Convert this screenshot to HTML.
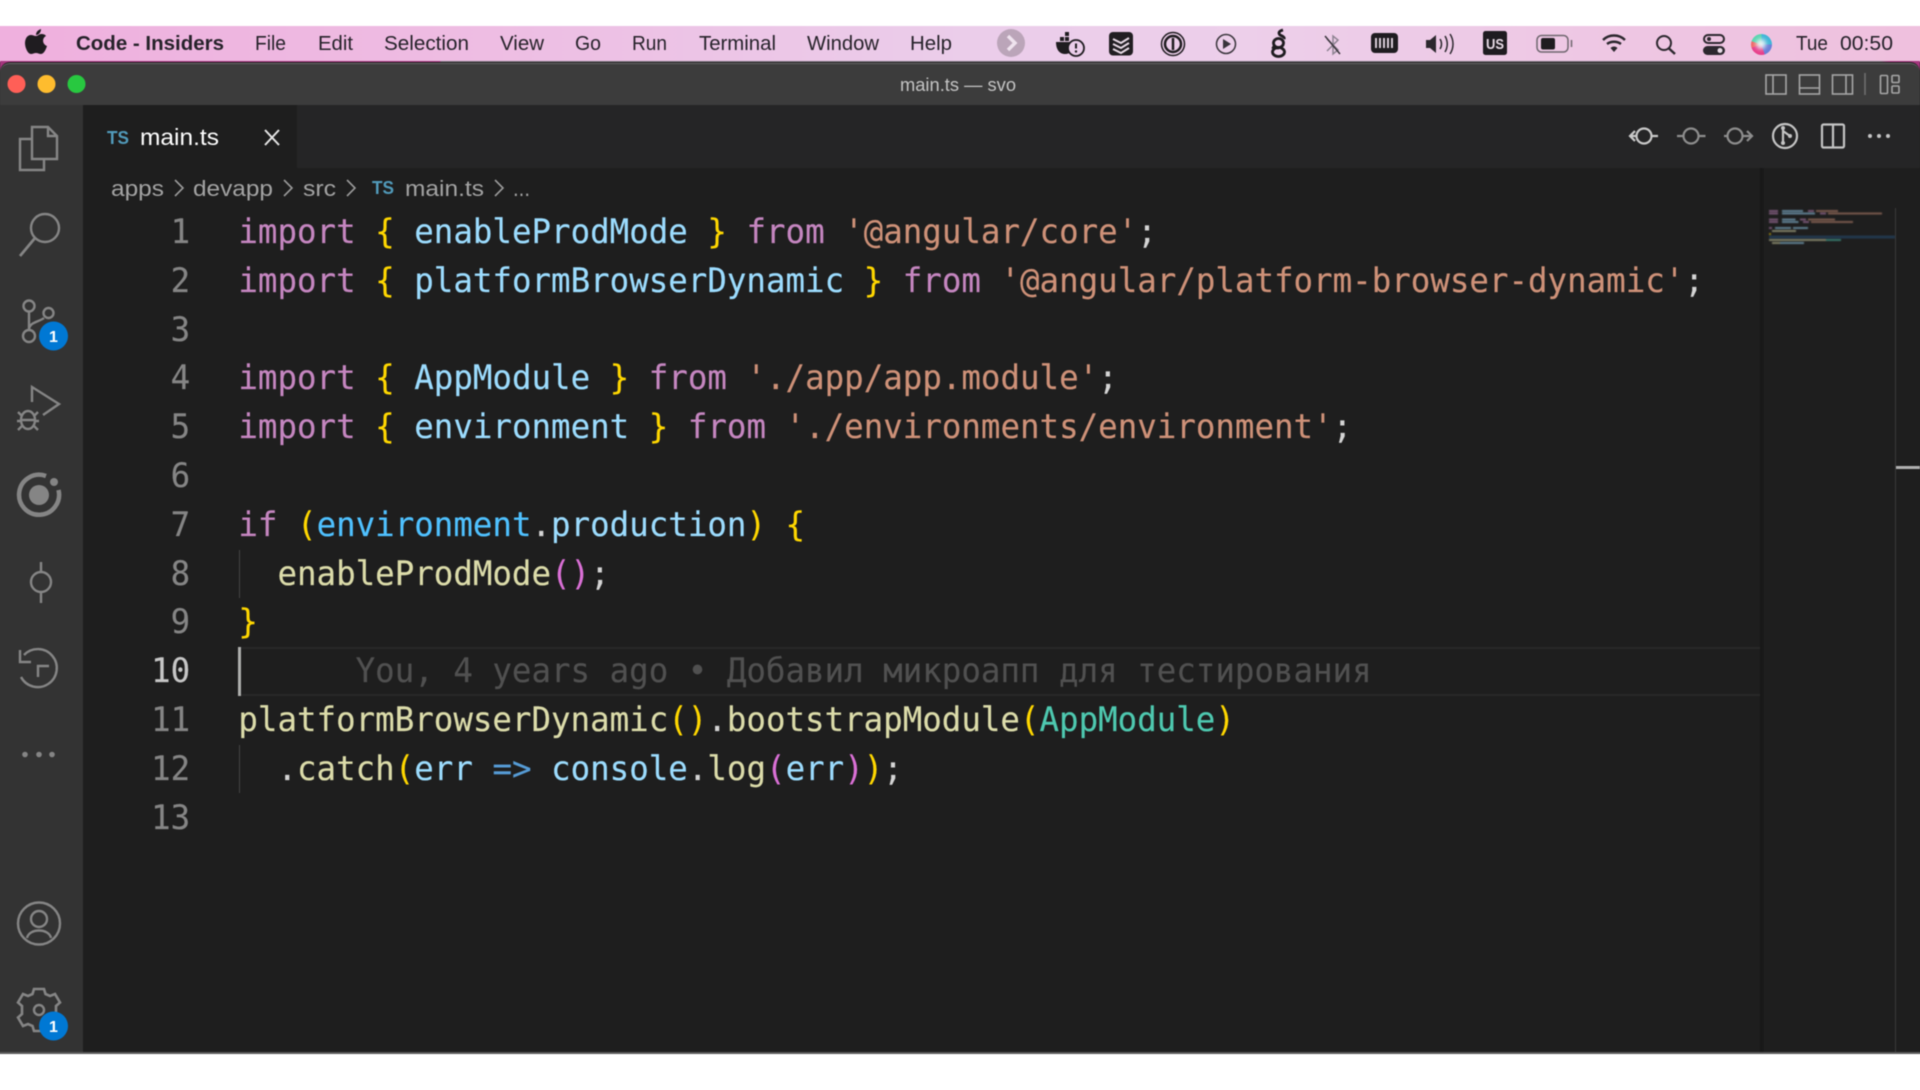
<!DOCTYPE html>
<html lang="en"><head><meta charset="utf-8"><title>main.ts — svo</title>
<style>
html,body{margin:0;padding:0;background:#fff;width:1920px;height:1080px;overflow:hidden}
#blur{position:absolute;left:-10px;top:-10px;width:1940px;height:1100px;overflow:hidden;filter:blur(.45px);background:#fff}
#root{position:absolute;left:10px;top:10px;width:1920px;height:1080px;background:#fff}
#edgeL{left:-10px;top:62px;width:10px;height:992px;background:#333}
#edgeR{left:1920px;top:62px;width:10px;height:992px;background:#1e1e1e}
#edgeMenuL{left:-10px;top:26px;width:10px;height:36px;background:#efb0de}
#edgeMenuR{left:1920px;top:26px;width:10px;height:36px;background:#efc0de}
.abs{position:absolute}
#menubar{left:0;top:26px;width:1920px;height:36px;background:linear-gradient(90deg,#efb0de 0%,#eebde3 25%,#ebcdea 50%,#edcfea 65%,#efc0de 100%)}
#win{left:0;top:62px;width:1920px;height:991px;background:#1e1e1e;border-radius:10px 10px 0 0;overflow:hidden}
#corner{left:0;top:61px;width:1920px;height:14px;background:linear-gradient(90deg,#a5357e 0,#a5357e 440px,#7d7680 441px,#7d7680 1880px,#a5357e 1890px)}
#title{left:0;top:63px;width:1920px;height:42px;background:#3c3c3c;border-top:1px solid #6a6a6a;box-sizing:border-box;border-radius:10px 10px 0 0}
#tabs{left:83px;top:105px;width:1837px;height:63px;background:#252526}
#tab{left:83px;top:105px;width:214px;height:63px;background:#1e1e1e}
#act{left:0;top:105px;width:83px;height:948px;background:#333}
#bottom{left:-10px;top:1052px;width:1940px;height:2px;background:#5a5a5a}
.ln,.n{position:absolute;font-family:"DejaVu Sans Mono","Liberation Mono",monospace;font-size:32.46px;line-height:48.8px;height:48.8px;white-space:pre;text-rendering:geometricPrecision;transform:scaleY(1.04);transform-origin:0 35.5px;-webkit-text-stroke:.15px currentColor}
.ln{left:238.4px;color:#d4d4d4}
.n{left:100px;width:90.2px;text-align:right;color:#858585}
.k{color:#c586c0}.b{color:#ffd700}.v{color:#9cdcfe}.s{color:#ce9178}.f{color:#dcdcaa}.t{color:#4ec9b0}.c{color:#4fc1ff}.o{color:#da70d6}.a{color:#569cd6}
svg{position:absolute;left:0;top:0}
</style></head><body><div id="blur"><div id="root">
<div class="abs" id="edgeL"></div><div class="abs" id="edgeR"></div><div class="abs" id="edgeMenuL"></div><div class="abs" id="edgeMenuR"></div>
<div class="abs" id="menubar"></div>
<div class="abs" id="corner"></div>
<div class="abs" id="win"></div>
<div class="abs" id="title"></div>
<div class="abs" id="tabs"></div>
<div class="abs" id="tab"></div>
<div class="abs" id="act"></div>
<div class="abs" style="left:240px;top:647px;width:1520px;height:49px;box-sizing:border-box;border:2px solid #282828;border-right:0;border-left:0"></div>
<div class="abs" style="left:1760px;top:168px;width:4px;height:885px;background:linear-gradient(90deg,#171717,#1a1a1a)"></div>
<div class="abs" style="left:1895px;top:208px;width:1px;height:845px;background:#3a3a3a"></div>
<div class="abs" style="left:1896px;top:466px;width:24px;height:3px;background:#b0b0b0"></div>
<div class="abs" style="left:239px;top:550px;width:1px;height:48px;background:#444"></div>
<div class="abs" style="left:239px;top:745px;width:1px;height:48px;background:#444"></div>
<div class="abs" style="left:238px;top:647px;width:3px;height:49px;background:#aeafad"></div>

<div class="n" style="top:208px">1</div>
<div class="n" style="top:256.8px">2</div>
<div class="n" style="top:305.6px">3</div>
<div class="n" style="top:354.4px">4</div>
<div class="n" style="top:403.2px">5</div>
<div class="n" style="top:452px">6</div>
<div class="n" style="top:500.8px">7</div>
<div class="n" style="top:549.6px">8</div>
<div class="n" style="top:598.4px">9</div>
<div class="n" style="top:647.2px;color:#c6c6c6">10</div>
<div class="n" style="top:696px">11</div>
<div class="n" style="top:744.8px">12</div>
<div class="n" style="top:793.6px">13</div>

<div class="ln" style="top:208px"><span class="k">import</span> <span class="b">{</span> <span class="v">enableProdMode</span> <span class="b">}</span> <span class="k">from</span> <span class="s">'@angular/core'</span>;</div>
<div class="ln" style="top:256.8px"><span class="k">import</span> <span class="b">{</span> <span class="v">platformBrowserDynamic</span> <span class="b">}</span> <span class="k">from</span> <span class="s">'@angular/platform-browser-dynamic'</span>;</div>
<div class="ln" style="top:354.4px"><span class="k">import</span> <span class="b">{</span> <span class="v">AppModule</span> <span class="b">}</span> <span class="k">from</span> <span class="s">'./app/app.module'</span>;</div>
<div class="ln" style="top:403.2px"><span class="k">import</span> <span class="b">{</span> <span class="v">environment</span> <span class="b">}</span> <span class="k">from</span> <span class="s">'./environments/environment'</span>;</div>
<div class="ln" style="top:500.8px"><span class="k">if</span> <span class="b">(</span><span class="c">environment</span>.<span class="v">production</span><span class="b">)</span> <span class="b">{</span></div>
<div class="ln" style="top:549.6px">  <span class="f">enableProdMode</span><span class="o">()</span>;</div>
<div class="ln" style="top:598.4px"><span class="b">}</span></div>
<div class="ln" style="top:647.2px;color:#505050">      You, 4 years ago • Добавил микроапп для тестирования</div>
<div class="ln" style="top:696px"><span class="f">platformBrowserDynamic</span><span class="b">()</span>.<span class="f">bootstrapModule</span><span class="b">(</span><span class="t">AppModule</span><span class="b">)</span></div>
<div class="ln" style="top:744.8px">  .<span class="f">catch</span><span class="b">(</span><span class="v">err</span> <span class="a">=&gt;</span> <span class="v">console</span>.<span class="f">log</span><span class="o">(</span><span class="v">err</span><span class="o">)</span><span class="b">)</span>;</div>

<svg width="1920" height="1080" viewBox="0 0 1920 1080" font-family="'Liberation Sans',sans-serif">
<!-- menu labels -->
<g fill="#26222a" font-size="20">
<text x="76" y="50" font-weight="700" textLength="148" lengthAdjust="spacingAndGlyphs">Code - Insiders</text>
<text x="255" y="50" textLength="31" lengthAdjust="spacingAndGlyphs">File</text>
<text x="318" y="50" textLength="35" lengthAdjust="spacingAndGlyphs">Edit</text>
<text x="384" y="50" textLength="85" lengthAdjust="spacingAndGlyphs">Selection</text>
<text x="500" y="50" textLength="44" lengthAdjust="spacingAndGlyphs">View</text>
<text x="575" y="50" textLength="26" lengthAdjust="spacingAndGlyphs">Go</text>
<text x="632" y="50" textLength="35" lengthAdjust="spacingAndGlyphs">Run</text>
<text x="699" y="50" textLength="77" lengthAdjust="spacingAndGlyphs">Terminal</text>
<text x="807" y="50" textLength="72" lengthAdjust="spacingAndGlyphs">Window</text>
<text x="910" y="50" textLength="42" lengthAdjust="spacingAndGlyphs">Help</text>
<text x="1796" y="50" textLength="32" lengthAdjust="spacingAndGlyphs">Tue</text>
<text x="1840" y="50" textLength="53" lengthAdjust="spacingAndGlyphs">00:50</text>
</g>
<!-- apple -->
<path fill="#1f1c20" d="M41 29c-3 1-5 3-5 6 3 0 5-3 5-6zM36 36c-2 0-3-1-5-1-4 0-6 4-6 8 0 5 3 11 6 11 2 0 3-1 5-1s3 1 5 1c3 0 5-5 6-8-5-2-5-8-1-10-1-2-4-2-5-2-2 0-3 2-5 2z"/>
<!-- traffic lights -->
<circle cx="16.5" cy="84" r="9" fill="#ff5f57"/><circle cx="46.5" cy="84" r="9" fill="#febc2e"/><circle cx="76.5" cy="84" r="9" fill="#28c840"/>
<text x="900" y="91" font-size="18" fill="#c4c4c4" textLength="116" lengthAdjust="spacingAndGlyphs">main.ts — svo</text>

<!-- status icons -->
<circle cx="1011" cy="43" r="14" fill="#bba5b9"/><path d="M1008 36l7 7-7 7" fill="none" stroke="#efe3ee" stroke-width="3.5"/>
<!-- docker -->
<g fill="#1f1c20"><path d="M1056 42h19c0 8-5 12-10 12-6 0-9-5-9-12z"/><rect x="1060" y="37" width="4" height="4"/><rect x="1065" y="37" width="4" height="4"/><rect x="1065" y="32" width="4" height="4"/></g>
<circle cx="1076" cy="48" r="8" fill="#ebcdea" stroke="#1f1c20" stroke-width="1.8"/><path d="M1076 43.500v5" stroke="#1f1c20" stroke-width="2"/><circle cx="1076" cy="51.500" r="1.200" fill="#1f1c20"/>
<!-- todoist -->
<rect x="1109" y="32" width="24" height="23.500" rx="4" fill="#211e22"/><path d="M1113 39l8 4 8-5M1113 44l8 4 8-5M1113 49l8 4 8-5" fill="none" stroke="#e8dbe6" stroke-width="2"/>
<!-- 1password -->
<circle cx="1173" cy="44" r="11.500" fill="none" stroke="#1f1c20" stroke-width="1.500"/><circle cx="1173" cy="44" r="8" fill="none" stroke="#1f1c20" stroke-width="2.500"/><path d="M1173 38v12" stroke="#1f1c20" stroke-width="2.500"/>
<!-- play -->
<circle cx="1226" cy="44" r="9.500" fill="none" stroke="#3a353c" stroke-width="1.500"/><path d="M1223 39l8 5-8 5z" fill="#3a353c"/>
<!-- snake -->
<g fill="none" stroke="#1f1c20" stroke-width="2.800"><ellipse cx="1278.500" cy="43" rx="5" ry="4.500"/><ellipse cx="1278.500" cy="52" rx="6" ry="4.500"/><path d="M1283 30c-4 1-5 3-3 5 2 1 5 2 4 4"/><path d="M1272 47c2 1 5 1 7 1"/></g>
<!-- bt off -->
<path d="M1327 39l11 11-5 4v-18l5 4-11 11" fill="none" stroke="#8d8391" stroke-width="1.500"/><path d="M1325 36l15 18" stroke="#3a353c" stroke-width="1.500"/>
<!-- memory -->
<rect x="1371" y="33" width="27" height="20" rx="4" fill="#1f1c20"/><path d="M1376 38v10M1380 38v10M1384 38v10M1388 38v10M1392 38v10" stroke="#e8dbe6" stroke-width="1.800"/>
<!-- volume -->
<path d="M1426 40h4l6-5v18l-6-5h-4z" fill="#2c282e"/><path d="M1440 39c2 3 2 7 0 10M1445 36c3 5 3 11 0 16M1450 34c4 6 4 14 0 20" fill="none" stroke="#2c282e" stroke-width="1.500"/>
<!-- US -->
<rect x="1483" y="31" width="24" height="24" rx="2.500" fill="#1f1c20"/><text x="1486" y="49" font-size="15" font-weight="700" fill="#e8dbe6" textLength="18" lengthAdjust="spacingAndGlyphs">US</text>
<!-- battery -->
<rect x="1537" y="35.500" width="31" height="16.500" rx="4.500" fill="none" stroke="#6f676f" stroke-width="1.500"/><rect x="1541" y="38" width="14" height="11.500" rx="2" fill="#1f1c20"/><path d="M1571.500 40v7" stroke="#6f676f" stroke-width="1.500"/>
<!-- wifi -->
<path d="M1603 40c6-6 16-6 22 0M1607 44c4-3 10-3 14 0" fill="none" stroke="#2c282e" stroke-width="2.400"/><path d="M1610.500 48c2-2 5-2 7 0l-3.500 4z" fill="#2c282e"/>
<!-- search -->
<circle cx="1664" cy="43" r="7" fill="none" stroke="#2c282e" stroke-width="2"/><path d="M1669 48.500l6 5.500" stroke="#2c282e" stroke-width="2.400"/>
<!-- control -->
<rect x="1704" y="35" width="20" height="8" rx="4" fill="none" stroke="#2c282e" stroke-width="2"/><circle cx="1709" cy="39" r="2" fill="#2c282e"/><rect x="1703" y="46" width="22" height="9" rx="4.500" fill="#2c282e"/><circle cx="1720" cy="50.500" r="2.500" fill="#e8dbe6"/>

<!-- layout icons -->
<g fill="none" stroke="#a6a6a6" stroke-width="1.600">
<rect x="1766" y="75" width="20" height="19" /><path d="M1773 75v19"/>
<rect x="1799.500" y="75" width="20" height="19"/><path d="M1799.500 88h20"/>
<rect x="1832.500" y="75" width="20" height="19"/><path d="M1846 75v19"/>
<path d="M1865 73v22" stroke="#6e6e6e"/>
<rect x="1880.500" y="75.500" width="7" height="18" rx="1"/><rect x="1892" y="75.500" width="7" height="7" rx="1"/><rect x="1892" y="86" width="7" height="7" rx="1"/>
</g>
<!-- tab -->
<text x="107" y="144" font-size="18" font-weight="700" fill="#519aba" textLength="22" lengthAdjust="spacingAndGlyphs">TS</text>
<text x="140" y="145" font-size="23" fill="#ffffff" textLength="79" lengthAdjust="spacingAndGlyphs">main.ts</text>
<path d="M265 130l14 15M279 130l-14 15" stroke="#e6e6e6" stroke-width="2"/>
<!-- tab actions -->
<g fill="none" stroke-width="2.200">
<g stroke="#c8c8c8"><circle cx="1644" cy="136" r="7.500"/><path d="M1637 136h-6M1635 131l-5 5 5 5M1651 136h7"/></g>
<g stroke="#8d8d8d"><circle cx="1691" cy="136" r="7.500"/><path d="M1677 136h6.500M1698.500 136h7"/></g>
<g stroke="#8d8d8d"><circle cx="1735" cy="136" r="7.500"/><path d="M1724 136h3.500M1742.500 136h8M1747 131l5 5-5 5"/></g>
<g stroke="#c4c4c4"><circle cx="1785" cy="136" r="12"/><path d="M1783 129v14M1783 131l7 5"/></g>
<g stroke="#c4c4c4"><rect x="1822" y="124.500" width="22" height="23" rx="1.500"/><path d="M1833 124.500v23"/></g>
</g>
<g fill="#c4c4c4"><circle cx="1870" cy="136" r="2"/><circle cx="1879" cy="136" r="2"/><circle cx="1888" cy="136" r="2"/><circle cx="1783" cy="128" r="2"/><circle cx="1783" cy="143" r="2"/><circle cx="1790" cy="136" r="2"/></g>
<!-- breadcrumbs -->
<g font-size="22" fill="#a3a3a3">
<text x="111" y="196" textLength="53" lengthAdjust="spacingAndGlyphs">apps</text>
<text x="193" y="196" textLength="80" lengthAdjust="spacingAndGlyphs">devapp</text>
<text x="303" y="196" textLength="33" lengthAdjust="spacingAndGlyphs">src</text>
<text x="405" y="196" textLength="79" lengthAdjust="spacingAndGlyphs">main.ts</text>
<text x="513" y="196" textLength="17" lengthAdjust="spacingAndGlyphs">...</text>
<text x="372" y="194" font-size="18" font-weight="700" fill="#519aba" textLength="22" lengthAdjust="spacingAndGlyphs">TS</text>
</g>
<path d="M175 180l8 8-8 8M284 180l8 8-8 8M347 180l8 8-8 8M495 180l8 8-8 8" fill="none" stroke="#9a9a9a" stroke-width="1.600"/>

<!-- activity bar -->
<g fill="none" stroke="#858585" stroke-width="2.400">
<path d="M32 127h16l9 9v23H32zM48 127v9h9"/><path d="M32 139H20v31h24v-11"/>
<circle cx="45" cy="228" r="14"/><path d="M35 238l-15 18" stroke-width="2.800"/>
<circle cx="29" cy="306" r="5.500"/><circle cx="48.500" cy="313" r="5"/><circle cx="29" cy="336" r="6"/><path d="M29 312v18M29 330c0-8 10-8 15-12"/>
<path d="M32 402v-15l27 17-16 11"/><ellipse cx="28" cy="420" rx="7" ry="9"/><path d="M18 412l4 4M38 412l-4 4M17 421h5M39 421h-5M18 430l4-4M38 430l-4-4M21 420h14"/>
<path d="M58.500 490A20 20 0 1 1 46 476" stroke-width="4.500"/>
<circle cx="41" cy="582" r="10"/><path d="M41 562v10M41 592v11"/>
<path d="M24 655A19 19 0 1 1 21 677M20 650v12h11M38 677v-11h11"/>
<circle cx="39" cy="923.500" r="21"/><circle cx="39" cy="919" r="8"/><path d="M27 938c2-10 22-10 24 0"/>
<circle cx="39" cy="1010" r="5"/><path d="M34 989h10l1.500 5 4.500 2 5-2 5 8.500-4 3.500v8l4 3.500-5 8.500-5-2-4.500 2-1.500 5H34l-1.500-5-4.500-2-5 2-5-8.500 4-3.500v-8l-4-3.500 5-8.500 5 2 4.500-2z" stroke-width="2.600"/>
</g>
<g fill="#858585"><circle cx="39" cy="495" r="10"/><circle cx="54" cy="482" r="4"/><circle cx="25" cy="754.500" r="2.800"/><circle cx="39" cy="754.500" r="2.800"/><circle cx="52" cy="754.500" r="2.800"/></g>
<circle cx="53.500" cy="336" r="14.500" fill="#0078d4"/><text x="53.500" y="342" font-size="16" font-weight="700" fill="#fff" text-anchor="middle">1</text>
<circle cx="53.500" cy="1026" r="14.500" fill="#0078d4"/><text x="53.500" y="1032" font-size="16" font-weight="700" fill="#fff" text-anchor="middle">1</text>

<!-- minimap -->
<g opacity=".5" style="filter:blur(.6px)">
<rect x="1769" y="235.500" width="126" height="3" fill="#264f78"/>
<g fill="#c586c0"><rect x="1769" y="210" width="9" height="2"/><rect x="1769" y="212.500" width="9" height="2"/><rect x="1769" y="218.500" width="9" height="2"/><rect x="1769" y="221" width="9" height="2"/><rect x="1808" y="210" width="6" height="2"/><rect x="1820" y="212.500" width="6" height="2"/><rect x="1800" y="218.500" width="6" height="2"/><rect x="1803" y="221" width="6" height="2"/><rect x="1769" y="227" width="3" height="2"/></g>
<g fill="#9cdcfe"><rect x="1782" y="210" width="21" height="2"/><rect x="1782" y="212.500" width="33" height="2"/><rect x="1782" y="218.500" width="13.500" height="2"/><rect x="1782" y="221" width="16.500" height="2"/><rect x="1775" y="227" width="16" height="2"/><rect x="1793" y="227" width="15" height="2"/><rect x="1780" y="242" width="24" height="2"/></g>
<g fill="#ce9178"><rect x="1816" y="210" width="22" height="2"/><rect x="1828" y="212.500" width="54" height="2"/><rect x="1808" y="218.500" width="27" height="2"/><rect x="1811" y="221" width="42" height="2"/></g>
<g fill="#dcdcaa"><rect x="1772" y="230" width="24" height="2"/><rect x="1769" y="239" width="57" height="2"/><rect x="1772" y="242" width="8" height="2"/></g>
<rect x="1826" y="239" width="15" height="2" fill="#4ec9b0"/>
<rect x="1769" y="233" width="2" height="2" fill="#ffd700"/>
</g>
</svg>
<!-- siri -->
<div class="abs" style="left:1750.500px;top:33.500px;width:21px;height:21px;border-radius:50%;background:conic-gradient(#3fb6d8 0 25%,#6a7fd8 25% 45%,#e8408c 45% 70%,#f06a6a 70% 80%,#59d6b0 80% 100%)"></div>
<div class="abs" style="left:1756px;top:39px;width:10px;height:10px;border-radius:50%;background:#e8f2f4;filter:blur(2px)"></div>
<div class="abs" id="bottom"></div>
</div></div></body></html>
